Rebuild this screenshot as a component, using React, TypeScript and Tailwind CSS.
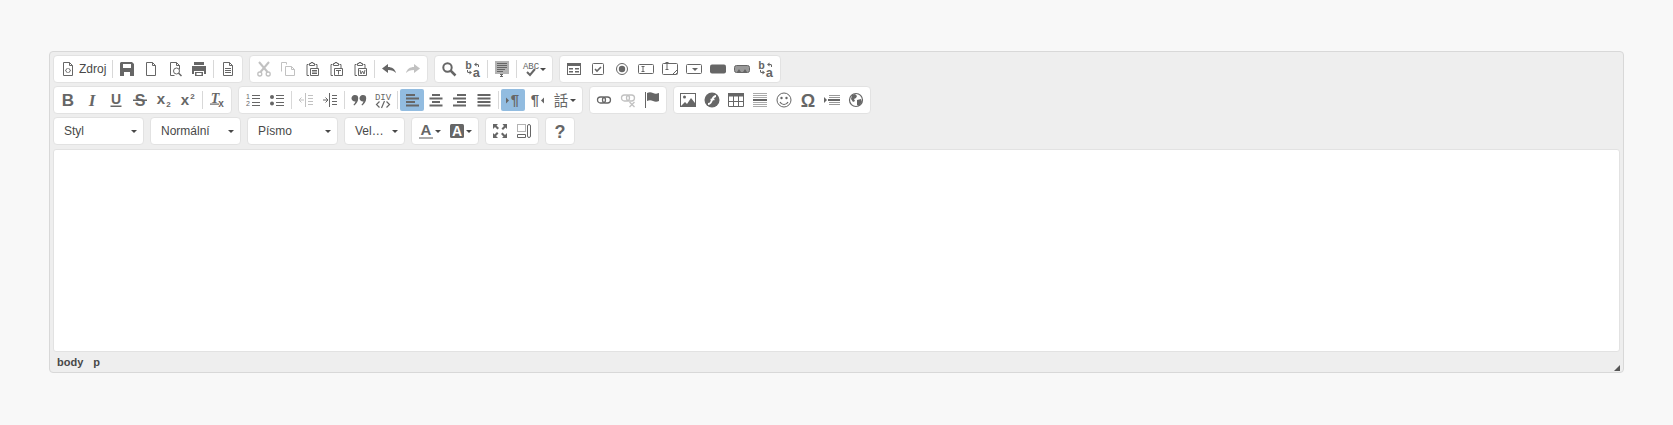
import type { ReactNode } from "react";

const ink = "#666666";

// stroked outline helper, all 16x16 icons
function Line({ d, w = 1 }: { d: string; w?: number }) {
  return <path d={d} fill="none" stroke={ink} strokeWidth={w} />;
}

function Fill({ d }: { d: string }) {
  return <path d={d} fill={ink} />;
}

function Txt({
  x = 8,
  y = 13,
  size = 14,
  bold = false,
  italic = false,
  font = "'Liberation Sans', sans-serif",
  children,
}: {
  x?: number;
  y?: number;
  size?: number;
  bold?: boolean;
  italic?: boolean;
  font?: string;
  children: ReactNode;
}) {
  return (
    <text
      x={x}
      y={y}
      fontSize={size}
      fontWeight={bold ? 700 : 400}
      fontStyle={italic ? "italic" : "normal"}
      fontFamily={font}
      textAnchor="middle"
      fill={ink}
    >
      {children}
    </text>
  );
}

const serif = "'Liberation Serif', serif";
const mono = "'Liberation Mono', monospace";
const clip = "M4.5 3.5h-1.5v11h2M11.5 3.5h1.5v4M5.5 4.5v-2h1.5v-1h2v1h1.5v2z";
const doc = "M3.5 1.5h6l3 3v10h-9z M9.5 1.5v3h3";

const replaceIcon = (
  <>
    <Txt x={3.5} y={8} size={11} bold font={mono}>
      b
    </Txt>
    <Txt x={11.5} y={15.5} size={13} bold font={mono}>
      a
    </Txt>
    <Fill d="M9 3.500l2.500-2v1.500h1.500l1 1v2h-1v-1.500l-.5-.5h-1v1.500zM7 11.500l-2.500 2v-1.500h-1.500l-1-1v-2h1v1.500l.5.5h1v-1.500z" />
  </>
);

const icons: Record<string, ReactNode> = {
  source: (
    <>
      <Line d={doc} />
      <Fill d="M7 7l-2 2.500 2 2.500h1l-2-2.500 2-2.500zM9 7l2 2.500-2 2.500h-1l2-2.500-2-2.500z" />
    </>
  ),
  save: <path fillRule="evenodd" fill={ink} d="M2 1h11l2 2v12h-14v-13zM4 3v4h8v-4zM5 11v4h6v-4z" />,
  newpage: <Line d={doc} />,
  preview: (
    <>
      <Line d="M3.500 14.500v-13h6l3 3v4M9.500 1.500v3h3M3.500 14.500h4" />
      <circle cx="9.500" cy="10" r="3" fill="none" stroke={ink} />
      <Line d="M11.500 12l3 3" w={1.500} />
    </>
  ),
  print: (
    <path
      fillRule="evenodd"
      fill={ink}
      d="M3 1h10v3h-10zM1 5h14v8h-2v-3h-10v3h-2zM4 11h8v4h-8zM5.500 12v2h5v-2z"
    />
  ),
  templates: (
    <>
      <Line d={doc} />
      <Line d="M5 7.500h6M5 9.500h6M5 11.500h6" />
    </>
  ),
  cut: (
    <>
      <Line d="M3 1l8.500 10M13 1l-8.500 10" w={2} />
      <circle cx="3.800" cy="13" r="2" fill="none" stroke={ink} strokeWidth="1.300" />
      <circle cx="12.200" cy="13" r="2" fill="none" stroke={ink} strokeWidth="1.300" />
    </>
  ),
  copy: (
    <>
      <Line d="M1.500 10.500v-9h5v2" />
      <Line d="M5.500 5.500v9h9v-6l-3-3zM11.500 5.500v3h3" />
    </>
  ),
  paste: (
    <>
      <Line d={clip} />
      <Line d="M6.500 7.500h8v7h-8z M8 9.500h5M8 11h5M8 12.500h5" />
    </>
  ),
  pastetext: (
    <>
      <Line d={clip} />
      <Line d="M6.500 7.500h8v7h-8z M8 9.500h5M10.500 9.500v4" />
    </>
  ),
  pasteword: (
    <>
      <Line d={clip} />
      <Line d="M6.500 7.500h8v7h-8z M8 9l1 4 1.500-3 1.500 3 1-4" />
    </>
  ),
  undo: <Fill d="M7 3v3c4 0 7 2 8 6-2-2-4-3-8-3v3l-6-4.500z" />,
  redo: <Fill d="M9 3v3c-4 0-7 2-8 6 2-2 4-3 8-3v3l6-4.500z" />,
  find: (
    <>
      <circle cx="6.500" cy="6.500" r="4.200" fill="none" stroke={ink} strokeWidth="2" />
      <Line d="M9.500 9.500l5 5" w={2.500} />
    </>
  ),
  replace: replaceIcon,
  selectall: (
    <>
      <rect x="1" y="0" width="14" height="13" fill="#b3b3b3" />
      <Line d="M3 2.500h10M3 4.500h10M3 6.500h10M3 8.500h8M3 10.500h6M6 13.500h3M7.500 13.500v2M6 15.500h3" />
    </>
  ),
  spell: (
    <>
      <Txt x={8} y={7.500} size={9} font={mono}>
        ABC
      </Txt>
      <Line d="M4 11l3 3 5-6" w={2} />
    </>
  ),
  form: (
    <path
      fillRule="evenodd"
      fill={ink}
      d="M1 2h14v12h-14zM2 5v8h12v-8zM3 7h4v1.500h-4zM9 7h4v1.500h-4zM3 10h4v1.500h-4zM9 10h4v1.500h-4z"
    />
  ),
  checkbox: (
    <>
      <rect x="2.500" y="2.500" width="11" height="11" rx="1" fill="none" stroke={ink} />
      <Line d="M5 8l2 2 4-4" w={1.600} />
    </>
  ),
  radio: (
    <>
      <circle cx="8" cy="8" r="5.500" fill="none" stroke={ink} />
      <circle cx="8" cy="8" r="3.200" fill={ink} />
    </>
  ),
  textfield: (
    <>
      <rect x=".5" y="3.500" width="15" height="9" rx="1" fill="none" stroke={ink} />
      <Line d="M3.500 5.500h3M5 5.500v5M3.500 10.500h3" />
    </>
  ),
  textarea: (
    <>
      <rect x=".5" y="2.500" width="15" height="11" rx="1" fill="none" stroke={ink} />
      <Line d="M3.500 1.500h3M5 1.500v7M3.500 8.500h3" />
      <Line d="M10 14l5-5M13 14l2-2" />
    </>
  ),
  select: (
    <>
      <rect x=".5" y="3.500" width="15" height="9" rx="1" fill="none" stroke={ink} />
      <Fill d="M6 7h6l-3 3z" />
    </>
  ),
  button: <rect x="0" y="3.500" width="16" height="9" rx="2" fill={ink} />,
  imagebutton: (
    <>
      <rect x=".5" y="4.500" width="15" height="7" rx="2" fill="#999" stroke={ink} />
      <Fill d="M3 11l2-3 2 3zM9 11l2-3 2 3z" />
    </>
  ),
  bold: (
    <Txt size={17} y={14} bold>
      B
    </Txt>
  ),
  italic: (
    <Txt size={17} y={14} bold italic font={serif}>
      I
    </Txt>
  ),
  underline: (
    <>
      <Txt size={14} y={11.500} bold>
        U
      </Txt>
      <Fill d="M2.500 13.500h11v1.500h-11z" />
    </>
  ),
  strike: (
    <>
      <Txt size={16} y={13.500} bold>
        S
      </Txt>
      <Fill d="M1 7.500h14v1.500h-14z" />
    </>
  ),
  sub: (
    <>
      <Txt x={5} y={11.500} size={15} bold>
        x
      </Txt>
      <Txt x={12.500} y={14.500} size={8} bold>
        2
      </Txt>
    </>
  ),
  sup: (
    <>
      <Txt x={5} y={13} size={15} bold>
        x
      </Txt>
      <Txt x={12.500} y={7} size={8} bold>
        2
      </Txt>
    </>
  ),
  removeformat: (
    <>
      <Txt x={6} y={10.500} size={14} bold italic font={serif}>
        T
      </Txt>
      <Fill d="M1 11.500h9v1.200h-9z" />
      <Txt x={12} y={15} size={10} bold>
        x
      </Txt>
    </>
  ),
  ol: (
    <>
      <Txt x={3} y={7} size={7}>
        1
      </Txt>
      <Txt x={3} y={14} size={7}>
        2
      </Txt>
      <Line d="M7 3.500h8M7 6.500h8M7 10.500h8M7 13.500h8" />
    </>
  ),
  ul: (
    <>
      <circle cx="3" cy="5" r="2" fill={ink} />
      <circle cx="3" cy="11.500" r="2" fill={ink} />
      <Line d="M7 3.500h8M7 6.500h8M7 10.500h8M7 13.500h8" />
    </>
  ),
  outdent: (
    <>
      <Line d="M7.500 1v14" />
      <Line d="M10 3.500h5M10 6.500h5M10 9.500h5M10 12.500h5" />
      <Line d="M6 8h-5M3.500 5.500l-2.500 2.500 2.500 2.500" />
    </>
  ),
  indent: (
    <>
      <Line d="M7.500 1v14" />
      <Line d="M10 3.500h5M10 6.500h5M10 9.500h5M10 12.500h5" />
      <Line d="M1 8h5M3.500 5.500l2.500 2.500-2.500 2.500" />
    </>
  ),
  quote: (
    <Fill d="M4 3a3.200 3.200 0 0 1 3.200 3.200c0 3-1.500 5.500-4 7.300l-.8-.8c1.200-1 1.800-2 2-3.400a3.200 3.200 0 1 1-.4-6.300zM12 3a3.200 3.200 0 0 1 3.200 3.200c0 3-1.500 5.500-4 7.300l-.8-.8c1.200-1 1.800-2 2-3.400a3.200 3.200 0 1 1-.4-6.300z" />
  ),
  div: (
    <>
      <Txt y={7.500} size={9} font={mono}>
        DIV
      </Txt>
      <Line d="M4.500 9.500l-3 3 3 3M11.500 9.500l3 3-3 3M9.500 9l-3 7" w={1.200} />
    </>
  ),
  left: <Fill d="M2 2h9v2h-9zM2 5.500h13v2h-13zM2 9h9v2h-9zM2 12.500h13v2h-13z" />,
  center: <Fill d="M4 2h8v2h-8zM1.500 5.500h13v2h-13zM4 9h8v2h-8zM1.500 12.500h13v2h-13z" />,
  right: <Fill d="M5 2h9v2h-9zM1 5.500h13v2h-13zM5 9h9v2h-9zM1 12.500h13v2h-13z" />,
  justify: <Fill d="M1.500 2h13v2h-13zM1.500 5.500h13v2h-13zM1.500 9h13v2h-13zM1.500 12.500h13v2h-13z" />,
  ltr: (
    <>
      <Txt x={10} y={13} size={15} bold>
        ¶
      </Txt>
      <Fill d="M1 5.500l3 3-3 3z" />
    </>
  ),
  rtl: (
    <>
      <Txt x={6} y={13} size={15} bold>
        ¶
      </Txt>
      <Fill d="M15 5.500l-3 3 3 3z" />
    </>
  ),
  language: (
    <Txt y={13.500} size={14.500} font="'Noto Sans CJK TC', sans-serif">
      話
    </Txt>
  ),
  link: (
    <>
      <rect x="1.500" y="5" width="8" height="6" rx="3" fill="none" stroke={ink} strokeWidth="1.300" />
      <rect x="6.500" y="5" width="8" height="6" rx="3" fill="none" stroke={ink} strokeWidth="1.300" />
    </>
  ),
  unlink: (
    <>
      <rect x="1.500" y="3" width="8" height="6" rx="3" fill="none" stroke={ink} strokeWidth="1.300" />
      <rect x="6.500" y="3" width="8" height="6" rx="3" fill="none" stroke={ink} strokeWidth="1.300" />
      <Line d="M9.500 10l5 5M14.500 10l-5 5" w={1.300} />
    </>
  ),
  anchor: (
    <>
      <Fill d="M1 0h1v16h-1z" />
      <Fill d="M3 1c2-1 4-1 6 0s3 1 6 0v8c-2 1-4 1-6 0s-4-1-6 0z" />
    </>
  ),
  image: (
    <>
      <rect x=".5" y="1.500" width="15" height="13" fill="none" stroke={ink} />
      <circle cx="4.500" cy="5" r="1.500" fill={ink} />
      <Fill d="M1 14l4-4 2 2 4-6 4 5v3z" />
    </>
  ),
  flash: (
    <>
      <circle cx="8" cy="8" r="7.500" fill={ink} />
      <path d="M4 12c3 0 3-2 4-4s1.500-4 4-4" fill="none" stroke="#fff" strokeWidth="1.800" />
      <path d="M6.500 7.500h4" fill="none" stroke="#fff" strokeWidth="1.500" />
    </>
  ),
  table: (
    <>
      <rect x="0" y="1" width="16" height="3.500" fill={ink} />
      <Line d="M.5 1.500h15v13h-15zM.5 9.500h15M5.500 1.500v13M10.500 1.500v13" />
    </>
  ),
  hr: (
    <>
      <path d="M1 1.500h14M1 3.500h14M1 5.500h14M1 10.500h14M1 12.500h14M1 14.500h14" stroke="#aaa" fill="none" />
      <Fill d="M1 7h14v2h-14z" />
    </>
  ),
  smiley: (
    <>
      <circle cx="8" cy="8" r="7" fill="none" stroke={ink} />
      <circle cx="5.500" cy="6" r="1.200" fill={ink} />
      <circle cx="10.500" cy="6" r="1.200" fill={ink} />
      <Line d="M4 10c1 2 2.500 2.500 4 2.500s3-.5 4-2.500" w={1.200} />
    </>
  ),
  omega: (
    <Txt size={18} y={14.500} bold>
      Ω
    </Txt>
  ),
  pagebreak: (
    <>
      <Fill d="M0 5l3 3-3 3z" />
      <Fill d="M4 7h12v2h-12z" />
      <path d="M5 3.500h11M5 5.500h11M5 10.500h11M5 12.500h11" fill="none" stroke="#999" />
    </>
  ),
  iframe: (
    <>
      <circle cx="8" cy="8" r="6.500" fill="none" stroke={ink} strokeWidth="1.200" />
      <Fill d="M4 3l3-1 2 2-1 2-2 1 1 2-2 1-2-3zM9 8l4-1 1 3-3 4-2-1z" />
    </>
  ),
  textcolor: (
    <>
      <Txt y={12} size={15} bold>
        A
      </Txt>
      <path d="M1 14h14v2h-14z" fill="#aaaaaa" />
    </>
  ),
  bgcolor: (
    <>
      <rect x="1" y="1" width="14" height="14" rx="1.500" fill={ink} />
      <text
        x="8"
        y="13"
        fontSize="14"
        fontWeight="700"
        fontFamily="'Liberation Sans', sans-serif"
        textAnchor="middle"
        fill="#ffffff"
      >
        A
      </text>
    </>
  ),
  maximize: (
    <Fill d="M1 1h5l-1.500 1.500 2.500 2.500-1.500 1.500-2.500-2.500-2 2zM15 1v5l-1.500-1.500-2.500 2.500-1.500-1.500 2.500-2.500-1.500-2zM1 15v-5l1.500 1.500 2.500-2.500 1.500 1.500-2.500 2.500 2 2zM15 15h-5l1.500-1.500-2.500-2.500 1.500-1.500 2.500 2.500 2-2z" />
  ),
  showblocks: (
    <>
      <path d="M1.500 1.500h8v7h-8z" fill="none" stroke={ink} strokeDasharray="1 1" />
      <Line d="M1.500 11.500h8v3h-8z" />
      <rect x="11.500" y="1.500" width="3" height="13" rx="1.500" fill="none" stroke={ink} />
    </>
  ),
  about: (
    <Txt size={18} y={14.500} bold>
      ?
    </Txt>
  ),
};

function Btn({
  name,
  dim,
  on,
  arrow,
  label,
}: {
  name: string;
  dim?: boolean;
  on?: boolean;
  arrow?: boolean;
  label?: string;
}) {
  return (
    <span
      className={`flex h-[22px] items-center rounded-[2px] px-1 ${on ? "bg-[#92bce0]" : ""} ${dim ? "opacity-40" : ""} ${label ? "w-[54px]" : ""}`}
    >
      <svg width="16" height="16" viewBox="0 0 16 16" className="shrink-0 overflow-visible">
        {icons[name]}
      </svg>
      {label && <span className="ml-[3px] whitespace-nowrap text-xs text-[#484848]">{label}</span>}
      {arrow && (
        <span className="ml-px h-0 w-0 border-x-[3px] border-t-[3px] border-x-transparent border-t-[#484848]" />
      )}
    </span>
  );
}

function Sep() {
  return <span className="mx-[2px] h-[18px] w-px bg-[#d8d8d8]" />;
}

function Group({ children }: { children: ReactNode }) {
  return (
    <div className="flex h-[28px] items-center rounded-[4px] border border-[#e2e2e2] bg-white px-[2px]">
      {children}
    </div>
  );
}

function Combo({ label, wide = true }: { label: string; wide?: boolean }) {
  return (
    <div
      className={`flex h-[28px] items-center justify-between rounded-[4px] border border-[#e2e2e2] bg-white pl-[10px] pr-[6px] text-xs text-[#484848] ${wide ? "w-[91px]" : "w-[61px]"}`}
    >
      <span>{label}</span>
      <span className="h-0 w-0 border-x-[3px] border-t-[3px] border-x-transparent border-t-[#484848]" />
    </div>
  );
}

const row = "flex gap-[6px]";

export default function App() {
  return (
    <div className="min-h-screen bg-[#f8f8f8] pb-[52px] pl-[49px] pr-[49px] pt-[51px] font-['Liberation_Sans',Arial,sans-serif]">
      <div className="rounded-[4px] border border-[#d8d8d8] bg-[#eeeeee]">
        <div className="flex flex-col gap-[3px] px-[3px] pt-[3px]">
          <div className={row}>
            <Group>
              <Btn name="source" label="Zdroj" />
              <Sep />
              <Btn name="save" />
              <Btn name="newpage" />
              <Btn name="preview" />
              <Btn name="print" />
              <Sep />
              <Btn name="templates" />
            </Group>
            <Group>
              <Btn name="cut" dim />
              <Btn name="copy" dim />
              <Btn name="paste" />
              <Btn name="pastetext" />
              <Btn name="pasteword" />
              <Sep />
              <Btn name="undo" />
              <Btn name="redo" dim />
            </Group>
            <Group>
              <Btn name="find" />
              <Btn name="replace" />
              <Sep />
              <Btn name="selectall" />
              <Sep />
              <Btn name="spell" arrow />
            </Group>
            <Group>
              <Btn name="form" />
              <Btn name="checkbox" />
              <Btn name="radio" />
              <Btn name="textfield" />
              <Btn name="textarea" />
              <Btn name="select" />
              <Btn name="button" />
              <Btn name="imagebutton" />
              <Btn name="replace" />
            </Group>
          </div>
          <div className={row}>
            <Group>
              <Btn name="bold" />
              <Btn name="italic" />
              <Btn name="underline" />
              <Btn name="strike" />
              <Btn name="sub" />
              <Btn name="sup" />
              <Sep />
              <Btn name="removeformat" />
            </Group>
            <Group>
              <Btn name="ol" />
              <Btn name="ul" />
              <Sep />
              <Btn name="outdent" dim />
              <Btn name="indent" />
              <Sep />
              <Btn name="quote" />
              <Btn name="div" />
              <Sep />
              <Btn name="left" on />
              <Btn name="center" />
              <Btn name="right" />
              <Btn name="justify" />
              <Sep />
              <Btn name="ltr" on />
              <Btn name="rtl" />
              <Btn name="language" arrow />
            </Group>
            <Group>
              <Btn name="link" />
              <Btn name="unlink" dim />
              <Btn name="anchor" />
            </Group>
            <Group>
              <Btn name="image" />
              <Btn name="flash" />
              <Btn name="table" />
              <Btn name="hr" />
              <Btn name="smiley" />
              <Btn name="omega" />
              <Btn name="pagebreak" />
              <Btn name="iframe" />
            </Group>
          </div>
          <div className={row}>
            <Combo label="Styl" />
            <Combo label="Normální" />
            <Combo label="Písmo" />
            <Combo label="Vel…" wide={false} />
            <Group>
              <Btn name="textcolor" arrow />
              <Btn name="bgcolor" arrow />
            </Group>
            <Group>
              <Btn name="maximize" />
              <Btn name="showblocks" />
            </Group>
            <Group>
              <Btn name="about" />
            </Group>
          </div>
        </div>
        <div className="mx-[3px] mt-1 h-[203px] rounded-[3px] border border-[#e2e2e2] bg-white" />
        <div className="flex h-[20px] items-center justify-between px-1">
          <div className="flex gap-[10px] pl-[3px] text-[11px] font-bold text-[#484848]">
            <span>body</span>
            <span>p</span>
          </div>
          <svg width="6" height="6" viewBox="0 0 6 6" className="mr-[-1px] mt-[11px]">
            <path d="M6 0v6h-6z" fill="#555555" />
          </svg>
        </div>
      </div>
    </div>
  );
}
